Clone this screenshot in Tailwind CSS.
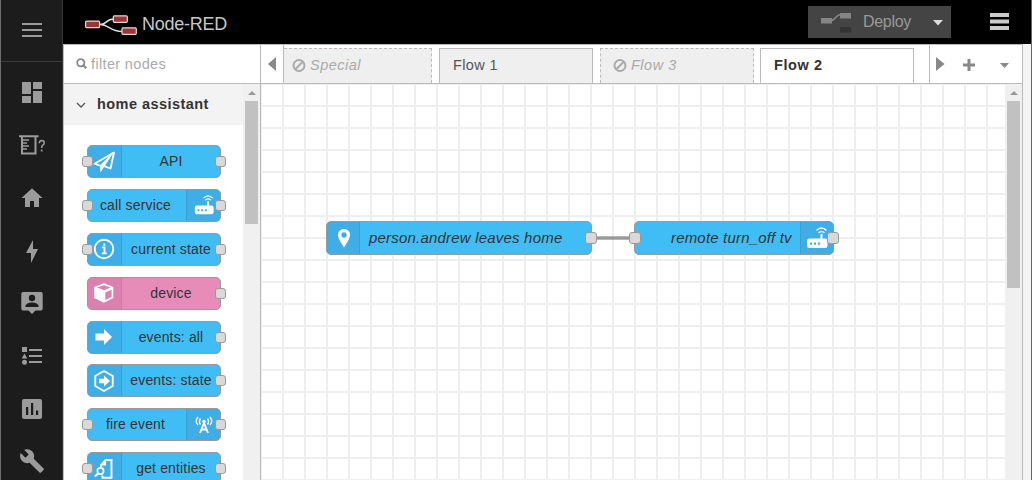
<!DOCTYPE html>
<html lang="en">
<head>
<meta charset="utf-8">
<title>Node-RED</title>
<script src="https://cdn.jsdelivr.net/npm/@tailwindcss/browser@4"></script>
</head>
<body class="w-[1032px] h-[480px] overflow-hidden flex bg-white font-['Liberation_Sans',Arial,sans-serif] text-[#333]">
<svg class="hidden">
  <symbol id="plane" viewBox="0 0 24 24"><path d="M3.500 13.300 22 2.500 18.500 18.500 12.300 16.200" fill="none" stroke="#fff" stroke-width="1.800" stroke-linejoin="round"/><path d="M1 14 22 1.500 8.500 16.800Z" fill="#fff"/><path d="M8 15.500 22 2 12 17 8.500 22.500Z" fill="#fff"/><path d="M4.800 13.600 17.500 6.100 8.300 14.900Z" fill="#3fade6"/></symbol>
  <symbol id="router" viewBox="0 0 24 24"><g fill="none" stroke="#fff"><path d="M11.500 4.500Q16.500 -.5 21.500 4.500M13.500 6.800Q16.500 4 19.500 6.800" stroke-width="1.400"/><path d="M16.500 8V15" stroke-width="2"/></g><rect x="2" y="12.500" width="20.500" height="9.500" rx="2.500" fill="#fff"/><path d="M5 16.500h2v2.200H5zM9 16.500h2v2.200H9zM13 16.500h2v2.200h-2z" fill="#3fade6"/></symbol>
</svg>

<!-- application rail -->
<nav class="w-[63px] h-full shrink-0 bg-[#1c1c1c] border-l border-l-[#6b6b6b] border-r border-r-[#383838] flex flex-col text-[#9b9b9b]">
  <div class="h-[62px] shrink-0 border-b border-[#3a3a3a] flex justify-center pt-[18px]">
    <svg width="24" height="24" fill="currentColor"><path d="M2 5h20v2H2zM2 11h20v2H2zM2 17h20v2H2z"/></svg>
  </div>
  <div class="flex flex-col items-center pt-[18px] gap-[29px]">
    <svg class="shrink-0" width="24" height="24" fill="currentColor"><path d="M2 2h9v12H2zM13 2h9v7h-9zM13 11h9v12h-9zM2 16h9v7H2z"/></svg>
    <svg class="shrink-0" width="28" height="24" fill="none" stroke="currentColor"><path d="M1 3.200H20.500M4 4V20.500H17.500V4" stroke-width="2"/><path d="M5 7h6M5 10h4M5 13h6M5 16h4" stroke-width="1.300"/><path d="M21.300 10.200Q21.500 7.500 23.800 7.500 26.300 7.600 26.200 10 26 11.500 24.600 12.300 23.700 13 23.700 15M23.700 16.500v2" stroke-width="1.600"/></svg>
    <svg class="shrink-0" width="24" height="24" fill="currentColor"><path d="M10 21v-6h4v6h5v-9h3.500L12 2.200 1.500 12H5v9z"/></svg>
    <svg class="shrink-0" width="24" height="24" fill="currentColor"><path d="M11 14H6L13 1v9h5L11 24z"/></svg>
    <svg class="shrink-0 -mt-px" width="24" height="24"><path d="M3 1h18q1.700 0 1.700 2v14.500q0 2-1.700 2h-5.500L12 23 8.500 19.500H3q-1.700 0-1.700-2V3Q1.300 1 3 1z" fill="currentColor"/><circle cx="12" cy="7" r="3.200" fill="#1c1c1c"/><path d="M5.500 16v-1.500Q7 11.500 12 11.500t6.500 3V16z" fill="#1c1c1c"/></svg>
    <svg class="shrink-0" width="24" height="24" fill="currentColor"><path d="M2 3h5v5H2zM4.500 9.500 7.300 14.500H1.700zM9 5h13v2H9zM9 11h13v2H9zM9 17h13v2H9z"/><circle cx="4.500" cy="18.200" r="2.500"/></svg>
    <svg class="shrink-0" width="24" height="24"><rect x="2" y="2" width="20" height="20" rx="2" fill="currentColor"/><path d="M6 10h2.200v8H6zM11 6h2.200v12H11zM16 13.500h2.200V18H16z" fill="#1c1c1c"/></svg>
    <svg class="shrink-0 -mt-[2px]" width="26" height="26" viewBox="0 0 24 24" fill="currentColor"><path d="M22.700 19l-9.100-9.100c.9-2.300.4-5-1.500-6.900-2-2-5-2.400-7.400-1.300L9 6 6 9 1.600 4.700C.4 7.100.9 10.100 2.900 12.100c1.900 1.900 4.600 2.400 6.900 1.500l9.100 9.100c.4.400 1 .4 1.400 0l2.300-2.300c.5-.4.500-1.100.1-1.400z"/></svg>
  </div>
</nav>

<div class="w-[968px] shrink-0 flex flex-col">
  <header class="h-[44px] shrink-0 bg-black flex items-center pl-[21px] pr-[22px]">
    <svg class="mt-[8px] shrink-0" width="54" height="22"><path d="M16 9.500C24 9.500 21 4 30 4M16 9.500C25 9.500 26 16.500 38 16.500" fill="none" stroke="#ddd" stroke-width="1.500"/><g fill="#a23334" stroke="#ddd" stroke-width="1.200"><rect x="1.600" y="6.100" width="14" height="6.500" rx="1"/><rect x="29.300" y=".8" width="14" height="6.500" rx="1"/><rect x="38" y="12.800" width="14.300" height="6.500" rx="1"/></g></svg>
    <span class="ml-[4px] mt-[3px] text-[18px] leading-5 text-[#c7c7c7] tracking-[-0.250px] whitespace-nowrap">Node-RED</span>
    <div class="ml-auto w-[143px] h-[32px] bg-[#444] flex items-center pl-[13px] text-[#999]">
      <svg width="30" height="22"><path d="M10 9.500C15 9.500 14 3.500 20 3.500" fill="none" stroke="#858585" stroke-width="1.500"/><path d="M0 7h11v5.500H0zM19 2h11v5.500H19z" fill="#858585"/><path d="M19 16h11v5.500H19z" fill="#333"/></svg>
      <span class="w-[48px] ml-[12px] text-[16px] tracking-[-0.300px]">Deploy</span>
      <svg class="ml-[22px] mt-px" width="11" height="6"><path d="M0 0h10L5 5.500z" fill="#ddd"/></svg>
    </div>
    <svg class="ml-[38px]" width="20" height="18"><path d="M1 0h19v4H1zM1 6.500h19v4H1zM1 13h19v4H1z" fill="#ccc"/></svg>
  </header>

  <div class="flex h-[436px]">
    <!-- palette -->
    <aside class="w-[198px] shrink-0 border-l border-r border-t border-[#bbb] flex flex-col overflow-hidden">
      <div class="h-[39px] shrink-0 border-b border-[#bbb] flex items-center pl-[12px] text-[14.500px] text-[#aaa]">
        <svg class="shrink-0" width="12" height="12" fill="none" stroke="#888"><circle cx="4.800" cy="4.800" r="3.600" stroke-width="1.800"/><path d="M7.500 7.500 10.300 10.300" stroke-width="2"/></svg>
        <span class="ml-[3px] mt-[2px] tracking-[0.350px]">filter nodes</span>
      </div>
      <div class="flex grow">
        <div class="w-[179px] shrink-0">
          <div class="h-[41px] bg-[#f3f3f3] flex items-center pl-[12px]">
            <svg width="10" height="6" fill="none" stroke="#555" stroke-width="1.300"><path d="M1 1 5 5 9 1"/></svg>
            <span class="ml-[11px] text-[14.500px] tracking-[0.450px] font-bold">home assistant</span>
          </div>
          <div id="palette" class="pt-[20px] pl-[23px] flex flex-col gap-[10.900px]"></div>
        </div>
        <div class="w-[17px] shrink-0 bg-[#f0f0f0] flex flex-col items-center">
          <svg class="mt-[7px]" width="8" height="4"><path d="M0 4 4 0 8 4z" fill="#999"/></svg>
          <div class="mt-[6px] w-[13px] h-[123px] bg-[#c1c1c1]"></div>
        </div>
      </div>
    </aside>

    <!-- workspace -->
    <main class="w-[762px] shrink-0 border-r border-t border-[#bbb] flex flex-col">
      <div class="h-[39px] shrink-0 border-b border-[#bbb] flex items-end text-[14.500px] text-[#555]">
        <div class="w-[23px] h-full shrink-0 border-r border-[#bbb] flex items-center justify-center"><svg width="9" height="14"><path d="M8 0v14L0 7z" fill="#888"/></svg></div>
        <div class="w-[148px] h-[35px] shrink-0 border border-l-0 border-dashed border-[#bbb] border-b-0 bg-[#efefef] flex items-center pl-[8px] text-[#aaa] italic"><svg width="14" height="14" fill="none" stroke="#aaa" stroke-width="2"><circle cx="7" cy="6.500" r="5.500"/><path d="M3.500 10 10.500 3"/></svg><span class="ml-[4px] tracking-[0.500px]">Special</span></div>
        <div class="ml-[7px] w-[154px] h-[35px] shrink-0 border border-[#bbb] border-b-0 bg-[#efefef] flex items-center pl-[13px] tracking-[0.350px]">Flow 1</div>
        <div class="ml-[7px] w-[154px] h-[35px] shrink-0 border border-dashed border-[#bbb] border-b-0 bg-[#efefef] flex items-center pl-[12px] text-[#aaa] italic"><svg width="14" height="14" fill="none" stroke="#aaa" stroke-width="2"><circle cx="7" cy="6.500" r="5.500"/><path d="M3.500 10 10.500 3"/></svg><span class="ml-[4px] tracking-[0.500px]">Flow 3</span></div>
        <div class="ml-[6px] w-[154px] h-[35px] shrink-0 border border-[#bbb] border-b-0 bg-white flex items-center pl-[13px] font-bold text-[#333] tracking-[0.600px]">Flow 2</div>
        <div class="ml-auto w-[93px] h-full border-l border-[#bbb] flex items-center pl-[6px]">
          <svg width="9" height="14"><path d="M0 0v14L8.500 7z" fill="#888"/></svg>
          <svg class="ml-[18px] mt-px" width="12" height="12"><path d="M4.500 0h3v4.500H12v3H7.500V12h-3V7.500H0v-3h4.500z" fill="#888"/></svg>
          <svg class="ml-[25px] mt-[3px]" width="9" height="5"><path d="M0 0h9L4.500 5z" fill="#888"/></svg>
        </div>
      </div>
      <div class="flex grow">
        <div class="relative w-[744px] h-[396px] shrink-0 overflow-hidden">
          <svg class="absolute inset-0" width="744" height="396">
            <defs><pattern id="grid" x="-1" y="-1" width="22" height="22" patternUnits="userSpaceOnUse"><path d="M0 0h22v2H0zM0 0h2v22H0z" fill="#eee"/></pattern></defs>
            <rect width="744" height="396" fill="url(#grid)"/>
            <path d="M336 154H368" stroke="#999" stroke-width="3.400"/>
          </svg>
          <div class="absolute left-[65px] top-[137px] w-[266px] h-[34px] rounded-[5px] border border-[#999] bg-[#41bdf5] flex overflow-hidden">
            <div class="w-[33px] shrink-0 bg-[#3fade6] border-r border-[#3b9fd4] flex items-center pl-[10px]"><svg width="14" height="20"><path d="M7 1C3.500 1 1 3.500 1 7c0 4 6 12.500 6 12.500S13 11 13 7c0-3.500-2.500-6-6-6z" fill="#fff"/><circle cx="7" cy="7" r="2.700" fill="#3fade6"/></svg></div>
            <span class="ml-[9px] text-[15px] leading-[32px] tracking-[0.200px] italic whitespace-nowrap">person.andrew leaves home</span>
          </div>
          <div class="absolute left-[373px] top-[137px] w-[200px] h-[34px] rounded-[5px] border border-[#999] bg-[#41bdf5] flex overflow-hidden">
            <span class="ml-[36px] text-[15px] leading-[32px] tracking-[0.180px] italic whitespace-nowrap">remote turn_off tv</span>
            <div class="ml-auto w-[33px] shrink-0 bg-[#3fade6] border-l border-[#3b9fd4] pl-[4px] pt-[4px]"><svg width="24" height="24"><use href="#router"/></svg></div>
          </div>
          <i class="absolute left-[324px] top-[148px] size-[12px] rounded-[3px] border border-[#999] bg-[#d9d9d9]"></i>
          <i class="absolute left-[368px] top-[148px] size-[12px] rounded-[3px] border border-[#999] bg-[#d9d9d9]"></i>
          <i class="absolute left-[566px] top-[148px] size-[12px] rounded-[3px] border border-[#999] bg-[#d9d9d9]"></i>
        </div>
        <div class="w-[17px] shrink-0 bg-[#f0f0f0] flex flex-col items-center">
          <svg class="mt-[7px]" width="8" height="4"><path d="M0 4 4 0 8 4z" fill="#999"/></svg>
          <div class="mt-[6px] w-[13px] h-[187px] bg-[#c1c1c1]"></div>
        </div>
      </div>
    </main>
    <div class="grow bg-[#f3f3f3]"></div>
  </div>
</div>
<div class="w-px h-full shrink-0 bg-[#666]"></div>

<script>
const icons = {
  plane: '<svg width="24" height="24"><use href="#plane"/></svg>',
  router: '<svg width="22" height="24" viewBox="0 0 24 24"><use href="#router"/></svg>',
  info: '<svg width="24" height="24" viewBox="0 0 22 22" fill="none" stroke="#fff"><circle cx="11" cy="11" r="8.500" stroke-width="1.700"/><path d="M9.300 9.500h2.200V15M9 15h4.500M11.300 6v2" stroke-width="1.700"/></svg>',
  cube: '<svg width="24" height="24" viewBox="0 0 22 22"><path d="M11 2 19.500 5.500V15.500L11 20 2 15.500V5.500Z" fill="#fff"/><path d="M4.800 6 11 3.800 17 6 11 8.500ZM12.200 10.500 18 8V14.500L12.200 17.600Z" fill="#dc81af"/></svg>',
  arrow: '<svg width="22" height="22"><path d="M2.500 7.500h8.500V3l8 8-8 8v-4.500H2.500z" fill="#fff"/></svg>',
  hex: '<svg width="24" height="24" viewBox="0 0 22 22"><path d="M11 1.800 19 6.400V15.600L11 20.200 3 15.600V6.400Z" fill="none" stroke="#fff" stroke-width="1.700"/><path d="M6.500 9h4.500V6l5.500 5-5.500 5v-3H6.500z" fill="#fff"/></svg>',
  tower: '<svg width="18" height="18" fill="none" stroke="#fff"><circle cx="9" cy="5.500" r="1.700" fill="#fff" stroke="none"/><path d="M5.500 2.500Q3.500 5.500 5.500 8.500M12.500 2.500Q14.500 5.500 12.500 8.500M3 1Q-.5 5.500 3 9M15 1Q18.500 5.500 15 9" stroke-width="1.400"/><path d="M9 7 5 17M9 7 13 17M6.500 13.500h5" stroke-width="1.900"/></svg>',
  doc: '<svg width="22" height="22" fill="none" stroke="#fff"><path d="M8 9V7L12.500 2H18.500V19.800H9.500V17.500" stroke-width="1.900"/><path d="M7.500 7.500h5.500V2z" fill="#fff" stroke="none"/><circle cx="7.500" cy="13" r="3.100" stroke-width="1.700"/><path d="M5.200 15.200 1.800 18.500" stroke-width="2"/></svg>'
};
const rows = [
  ['API','plane',0,1,1],['call service','router',1,1,1],['current state','info',0,1,1],['device','cube',0,0,1],
  ['events: all','arrow',0,0,1],['events: state','hex',0,0,1],['fire event','tower',1,1,1],['get entities','doc',0,1,1]
];
const port = side => `<i class="absolute ${side} top-[11px] size-[11px] rounded-[3px] border border-[#999] bg-[#d9d9d9]"></i>`;
document.getElementById('palette').innerHTML = rows.map(([name, icon, right, input, output]) => {
  const pink = name === 'device';
  const box = `<div class="w-[34px] shrink-0 flex items-center justify-center ${pink ? 'bg-[#dc81af] border-[#cf7aa5]' : 'bg-[#3fade6] border-[#3b9fd4]'} ${right ? 'border-l' : 'border-r pr-[2px]'}">${icons[icon]}</div>`;
  const label = `<span class="grow text-center text-[14px] leading-[31px] tracking-[0.150px] whitespace-nowrap ${right ? 'pr-[3px]' : ''}">${name}</span>`;
  return `<div class="relative w-[134px] h-[33px] shrink-0"><div class="w-full h-full rounded-[5px] border border-[#999] flex overflow-hidden ${pink ? 'bg-[#e78bb9]' : 'bg-[#41bdf5]'}">${right ? label + box : box + label}</div>${input ? port('left-[-5px]') : ''}${output ? port('right-[-5px]') : ''}</div>`;
}).join('');
</script>
</body>
</html>
